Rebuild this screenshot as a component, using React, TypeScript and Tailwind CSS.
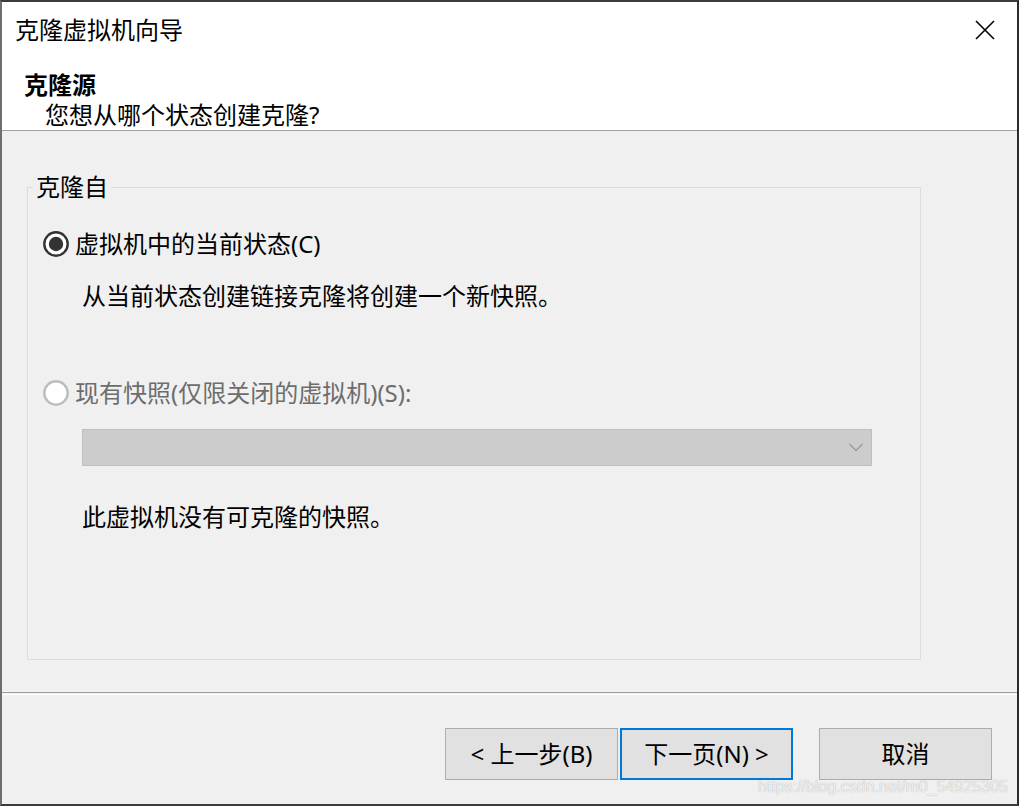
const font = { fontFamily: '"Noto Sans", "Noto Sans CJK SC", sans-serif' }

const RadioMark = ({ checked, disabled }: { checked?: boolean; disabled?: boolean }) => (
  <svg width="26" height="26" viewBox="0 0 26 26" className="shrink-0">
    <circle
      cx="13"
      cy="13"
      r="11.7"
      fill="#ffffff"
      stroke={disabled ? '#bcbcbc' : '#333333'}
      strokeWidth="2.4"
    />
    {checked && <circle cx="13" cy="13" r="7.2" fill="#333333" />}
  </svg>
)

const WizardButton = ({ label, primary }: { label: string; primary?: boolean }) => (
  <button
    className={`flex h-[52px] w-[173px] items-center justify-center bg-[#e1e1e1] text-[24px] leading-[30px] text-black ${
      primary ? 'border-2 border-[#0078d7]' : 'border border-[#adadad]'
    }`}
  >
    {label}
  </button>
)

export default function App() {
  return (
    <div
      className="relative flex h-[806px] w-[1019px] flex-col border-t-2 border-r-2 border-b-2 border-l-2 border-t-[#3c3c3c] border-r-[#2b2b2b] border-b-[#3a3a3a] border-l-[#6e6e6e] bg-[#f0f0f0] text-black"
      style={font}
    >
      {/* Header */}
      <div className="h-[129px] shrink-0 border-b border-[#a0a0a0] bg-white">
        <div className="flex h-[56px] items-center justify-between pl-[13px] pr-[22px]">
          <span className="text-[24px] leading-[30px]">克隆虚拟机向导</span>
          <svg width="20" height="20" viewBox="0 0 20 20">
            <path d="M1 1L19 19M19 1L1 19" stroke="#000" strokeWidth="1.6" fill="none" />
          </svg>
        </div>
        <div className="mt-[12px] pl-[22px] text-[24px] font-bold leading-[30px]">克隆源</div>
        <div className="pl-[43px] text-[24px] leading-[30px]">您想从哪个状态创建克隆?</div>
      </div>

      {/* Body */}
      <div className="h-[561px] shrink-0 pl-[25px]">
        <fieldset className="mt-[41px] h-[488px] w-[894px] border border-[#dcdcdc]">
          <legend className="ml-[5px] px-[3px] text-[24px] leading-[30px]">克隆自</legend>
          <div className="flex flex-col">
            <label className="mt-[27px] flex h-[30px] items-center gap-[6px] pl-[15px] text-[24px] leading-[30px]">
              <RadioMark checked />
              <span>虚拟机中的当前状态(C)</span>
            </label>
            <p className="mt-[22px] pl-[54px] text-[24px] leading-[30px]">
              从当前状态创建链接克隆将创建一个新快照。
            </p>
            <label className="mt-[67px] flex h-[30px] items-center gap-[6px] pl-[15px] text-[24px] leading-[30px] text-[#6d6d6d]">
              <RadioMark disabled />
              <span>现有快照(仅限关闭的虚拟机)(S):</span>
            </label>
            <div className="ml-[54px] mt-[21px] flex h-[37px] w-[790px] items-center justify-end border border-[#bfbfbf] bg-[#cccccc] pr-[8px]">
              <svg width="14" height="9" viewBox="0 0 14 9">
                <path d="M0.5 1L7 7.5L13.5 1" stroke="#9a9a9a" strokeWidth="1.3" fill="none" />
              </svg>
            </div>
            <p className="mt-[36px] pl-[54px] text-[24px] leading-[30px]">此虚拟机没有可克隆的快照。</p>
          </div>
        </fieldset>
      </div>

      {/* Separator */}
      <div className="h-px shrink-0 bg-[#a0a0a0]" />
      <div className="h-px shrink-0" />
      <div className="h-px shrink-0 bg-white" />

      {/* Footer */}
      <div className="flex flex-1 items-start justify-end pr-[25px] pt-[33px]">
        <div className="flex gap-[2px]">
          <WizardButton label="< 上一步(B)" />
          <WizardButton label="下一页(N) >" primary />
        </div>
        <div className="ml-[26px]">
          <WizardButton label="取消" />
        </div>
      </div>

      {/* Watermark */}
      <div
        className="absolute right-[9px] top-[777px] text-[16px] leading-[16px] text-white/80 [text-shadow:0_0_1px_#9a9a9a]"
        style={{ fontFamily: '"Liberation Sans", Arial, sans-serif' }}
      >
        https://blog.csdn.net/m0_54925305
      </div>
    </div>
  )
}
